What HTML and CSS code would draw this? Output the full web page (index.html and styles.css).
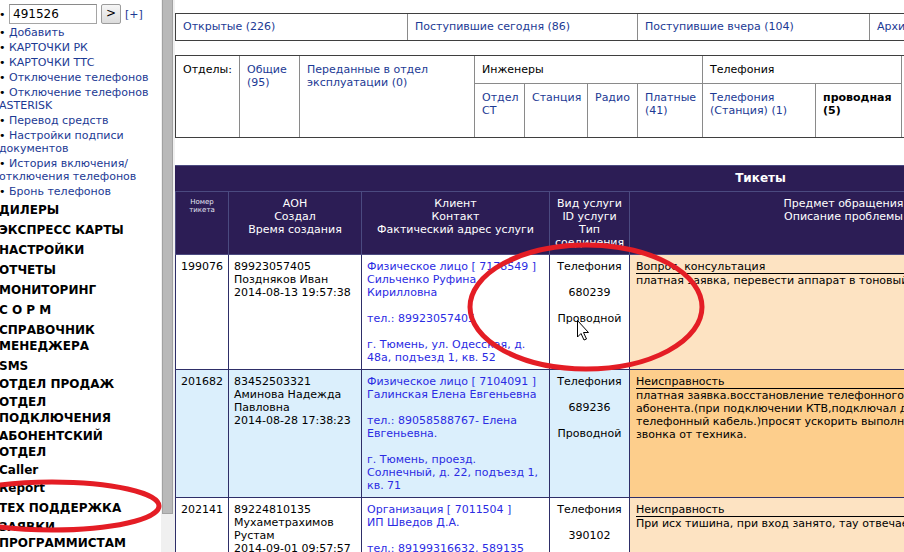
FILE: index.html
```html
<!DOCTYPE html>
<html lang="ru">
<head>
<meta charset="utf-8">
<title>Тикеты</title>
<link rel="stylesheet" href="styles.css">
</head>
<body>
<div class="sidebar">
  <div class="side-inner">
    <div class="search">• <span class="input">491526</span> <span class="btn">&gt;</span> <a class="lnk plus" href="#">[+]</a></div>
    <ul class="links">
      <li>• <a href="#">Добавить</a></li>
      <li>• <a href="#">КАРТОЧКИ РК</a></li>
      <li>• <a href="#">КАРТОЧКИ ТТС</a></li>
      <li>• <a href="#">Отключение телефонов</a></li>
      <li>• <a href="#">Отключение телефонов ASTERISK</a></li>
      <li>• <a href="#">Перевод средств</a></li>
      <li>• <a href="#">Настройки подписи документов</a></li>
      <li>• <a href="#">История включения/ отключения телефонов</a></li>
      <li>• <a href="#">Бронь телефонов</a></li>
    </ul>
    <ul class="menu">
      <li class="ga">ДИЛЕРЫ</li>
      <li class="ga">ЭКСПРЕСС КАРТЫ</li>
      <li class="ga">НАСТРОЙКИ</li>
      <li class="ga">ОТЧЕТЫ</li>
      <li class="ga">МОНИТОРИНГ</li>
      <li class="ga">С О Р М</li>
      <li class="ga">СПРАВОЧНИК<br>МЕНЕДЖЕРА</li>
      <li class="ga">SMS</li>
      <li class="gb">ОТДЕЛ ПРОДАЖ</li>
      <li class="gb">ОТДЕЛ<br>ПОДКЛЮЧЕНИЯ</li>
      <li class="gb">АБОНЕНТСКИЙ<br>ОТДЕЛ</li>
      <li class="gb">Caller</li>
      <li class="gb">Report</li>
      <li class="ga">ТЕХ ПОДДЕРЖКА</li>
      <li class="gc">ЗАЯВКИ<br>ПРОГРАММИСТАМ</li>
    </ul>
  </div>
</div>
<div class="splitter"><div class="bar"></div></div>
<div class="main">
  <table class="tabs">
    <tr>
      <td class="t1"><a href="#">Открытые (226)</a></td>
      <td class="t2"><a href="#">Поступившие сегодня (86)</a></td>
      <td class="t3"><a href="#">Поступившие вчера (104)</a></td>
      <td class="t4"><a href="#">Архив</a></td>
    </tr>
  </table>

  <table class="depts">
    <colgroup>
      <col class="k1"><col class="k2"><col class="k3"><col class="k4"><col class="k5"><col class="k6"><col class="k7"><col class="k8"><col class="k9"><col class="k10">
    </colgroup>
    <tr>
      <td rowspan="2" class="d-label">Отделы:</td>
      <td rowspan="2"><a href="#">Общие (95)</a></td>
      <td rowspan="2"><a href="#">Переданные в отдел эксплуатации (0)</a></td>
      <td colspan="4" class="d-head">Инженеры</td>
      <td colspan="2" class="d-head">Телефония</td>
      <td rowspan="2"></td>
    </tr>
    <tr class="sub">
      <td><a href="#">Отдел СТ</a></td>
      <td><a href="#">Станция</a></td>
      <td><a href="#">Радио</a></td>
      <td><a href="#">Платные (41)</a></td>
      <td><a href="#">Телефония (Станция) (1)</a></td>
      <td><b>проводная (5)</b></td>
    </tr>
  </table>

  <table class="tickets">
    <colgroup>
      <col class="c1"><col class="c2"><col class="c3"><col class="c4"><col class="c5"><col class="c6">
    </colgroup>
    <tr class="title"><th colspan="6">Тикеты</th></tr>
    <tr class="head">
      <th class="small">Номер<br>тикета</th>
      <th>АОН<br>Создал<br>Время создания</th>
      <th>Клиент<br>Контакт<br>Фактический адрес услуги</th>
      <th>Вид услуги<br>ID услуги<br>Тип<br>соединения</th>
      <th>Предмет обращения<br>Описание проблемы</th>
      <th>Статус<br>Исполнитель</th>
    </tr>
    <tr class="row">
      <td>199076</td>
      <td>89923057405<br>Поздняков Иван<br>2014-08-13 19:57:38</td>
      <td class="client"><a href="#">Физическое лицо [ 7178549 ]<br>Сильченко Руфина<br>Кирилловна<br><br>тел.: 89923057405<br><br>г. Тюмень, ул. Одесская, д.<br>48а, подъезд 1, кв. 52</a></td>
      <td class="svc">Телефония<br><br>680239<br><br>Проводной</td>
      <td class="desc peach"><span class="subj">Вопрос, консультация</span>платная заявка, перевести аппарат в тоновый режим</td>
      <td class="peach"></td>
    </tr>
    <tr class="row blue">
      <td>201682</td>
      <td>83452503321<br>Аминова Надежда<br>Павловна<br>2014-08-28 17:38:23</td>
      <td class="client"><a href="#">Физическое лицо [ 7104091 ]<br>Галинская Елена Евгеньевна<br><br>тел.: 89058588767- Елена<br>Евгеньевна.<br><br>г. Тюмень, проезд.<br>Солнечный, д. 22, подъезд 1,<br>кв. 71</a></td>
      <td class="svc">Телефония<br><br>689236<br><br>Проводной</td>
      <td class="desc orange"><span class="subj">Неисправность</span>платная заявка.восстановление телефонного соединения у<br>абонента.(при подключении КТВ,подключал дом. телефон в<br>телефонный кабель.)просят ускорить выполнение, ждут<br>звонка от техника.</td>
      <td class="orange"></td>
    </tr>
    <tr class="row">
      <td>202141</td>
      <td>89224810135<br>Мухаметрахимов<br>Рустам<br>2014-09-01 09:57:57</td>
      <td class="client"><a href="#">Организация [ 7011504 ]<br>ИП Шведов Д.А.<br><br>тел.: 89199316632, 589135</a></td>
      <td class="svc">Телефония<br><br>390102<br><br>Проводной</td>
      <td class="desc peach"><span class="subj">Неисправность</span>При исх тишина, при вход занято, тау отвечает</td>
      <td class="peach"></td>
    </tr>
  </table>
</div>

<svg class="marks" width="904" height="552" viewBox="0 0 904 552" aria-hidden="true">
  <ellipse cx="586" cy="307" rx="116" ry="62" fill="none" stroke="#e41d25" stroke-width="5"/>
  <ellipse cx="52" cy="506" rx="107" ry="24" fill="none" stroke="#e41d25" stroke-width="5"/>
  <path d="M577.5 320.5 L577.5 337 L581 333.5 L584 340 L586.5 339 L583.5 332.5 L588.5 332.5 Z" fill="#fff" stroke="#000" stroke-width="1" stroke-linejoin="miter"/>
</svg>
</body>
</html>
```

FILE: styles.css
```css
* { box-sizing: border-box; }
html, body { margin: 0; padding: 0; }
body {
  font-family: "DejaVu Sans", Verdana, sans-serif;
  font-size: 11px;
  line-height: 13px;
  color: #000;
  background: #fff;
  display: flex;
  width: 904px;
  height: 552px;
  overflow: hidden;
  position: relative;
}
a { color: #1c3a94; text-decoration: none; }

.sidebar {
  flex: none;
  width: 161px;
  overflow: hidden;
}
.side-inner {
  margin-left: -1px;
  width: 162px;
}
.search {
  height: 25px;
  padding-top: 3px;
  display: flex;
  align-items: center;
  white-space: pre;
}
.search .input {
  display: inline-block;
  width: 88px;
  height: 20px;
  border: 1px solid #a5a5a5;
  border-top-color: #8a8a8a;
  padding: 2px 3px;
  line-height: 14px;
  font-size: 12px;
}
.search .btn {
  display: inline-block;
  width: 20px;
  height: 20px;
  margin-left: 4px;
  border: 1px solid #9c9c9c;
  border-radius: 2px;
  background: linear-gradient(#f6f6f6, #dcdcdc);
  text-align: center;
  line-height: 17px;
  font-size: 12px;
}
.search .plus { margin-left: 4px; font-size: 11px; }

ul { list-style: none; margin: 0; padding: 0; }
.links { padding-top: 1px; }
.links li { margin-top: 2px; line-height: 13px; }
.links li:first-child { margin-top: 0; }

.menu { margin-top: 4px; }
.menu li {
  font-weight: bold;
  font-size: 12px;
  line-height: 16px;
  white-space: nowrap;
}
.menu .ga { margin-top: 4px; }
.menu .gb { margin-top: 2px; }
.menu .gc { margin-top: 3px; }

.splitter {
  flex: none;
  width: 14px;
  background: #f0f0f0;
  height: 552px;
}
.splitter .bar {
  margin-left: 1px;
  width: 11px;
  height: 514px;
  background: #b9b9b9;
  border: 1px solid #a2a2a2;
  border-top: none;
}

.main {
  flex: none;
  width: 1200px;
  padding-top: 13px;
}

table { border-spacing: 0; }

.tabs {
  border: 1px solid #3f3f3f;
  table-layout: fixed;
  width: 1000px;
}
.tabs td {
  padding: 6px 7px 7px;
  border-left: 1px solid #8a8a8a;
  white-space: nowrap;
}
.tabs td.t1 { border-left: none; width: 231px; }
.tabs td.t2 { width: 230px; }
.tabs td.t3 { width: 232px; }

.depts {
  margin-top: 14px;
  border: 1px solid #3f3f3f;
  table-layout: fixed;
  width: 1000px;
}
.depts col.k1 { width: 63px; }
.depts col.k2 { width: 60px; }
.depts col.k3 { width: 175px; }
.depts col.k4 { width: 50px; }
.depts col.k5 { width: 63px; }
.depts col.k6 { width: 50px; }
.depts col.k7 { width: 65px; }
.depts col.k8 { width: 113px; }
.depts col.k9 { width: 86px; }
.depts col.k10 { width: 273px; }
.depts td {
  vertical-align: top;
  padding: 7px 7px 6px;
  border-left: 1px solid #8a8a8a;
}
.depts td.d-label { border-left: none; }
.depts td.d-head { border-bottom: 1px solid #8a8a8a; height: 28px; }
.depts .sub td { height: 53px; }

.tickets {
  margin-top: 27px;
  border-collapse: collapse;
  table-layout: fixed;
  width: 1170px;
}
.tickets col.c1 { width: 53px; }
.tickets col.c2 { width: 133px; }
.tickets col.c3 { width: 188px; }
.tickets col.c4 { width: 80px; }
.tickets col.c5 { width: 428px; }
.tickets col.c6 { width: 288px; }

.tickets th {
  background: #2c1d55;
  color: #fff;
  font-weight: normal;
  border: 1px solid #4b4a80;
  vertical-align: top;
  padding: 5px 4px;
  white-space: nowrap;
}
.tickets .title th {
  height: 26px;
  font-weight: bold;
  font-size: 12px;
  vertical-align: middle;
  padding: 0;
  border-left-color: #2c1d55;
}
.tickets th.small {
  font-size: 7px;
  line-height: 8px;
  padding-top: 6px;
  color: #e6e6f4;
}
.tickets td {
  border: 1px solid #2e2e68;
  padding: 5px 5px;
  vertical-align: top;
  white-space: nowrap;
}
.tickets .blue td { background: #dbeffc; }
.tickets td.client a { color: #2b2be3; }
.tickets td.svc { text-align: center; }
.tickets td.peach { background: #fde3c2; }
.tickets .blue td.orange { background: #fdce8c; }
.tickets td.desc { padding-left: 6px; }
.subj {
  display: block;
  border-bottom: 1px solid #000;
  line-height: 12px;
  padding-top: 1px;
}

.marks {
  position: absolute;
  left: 0;
  top: 0;
  pointer-events: none;
}
```
